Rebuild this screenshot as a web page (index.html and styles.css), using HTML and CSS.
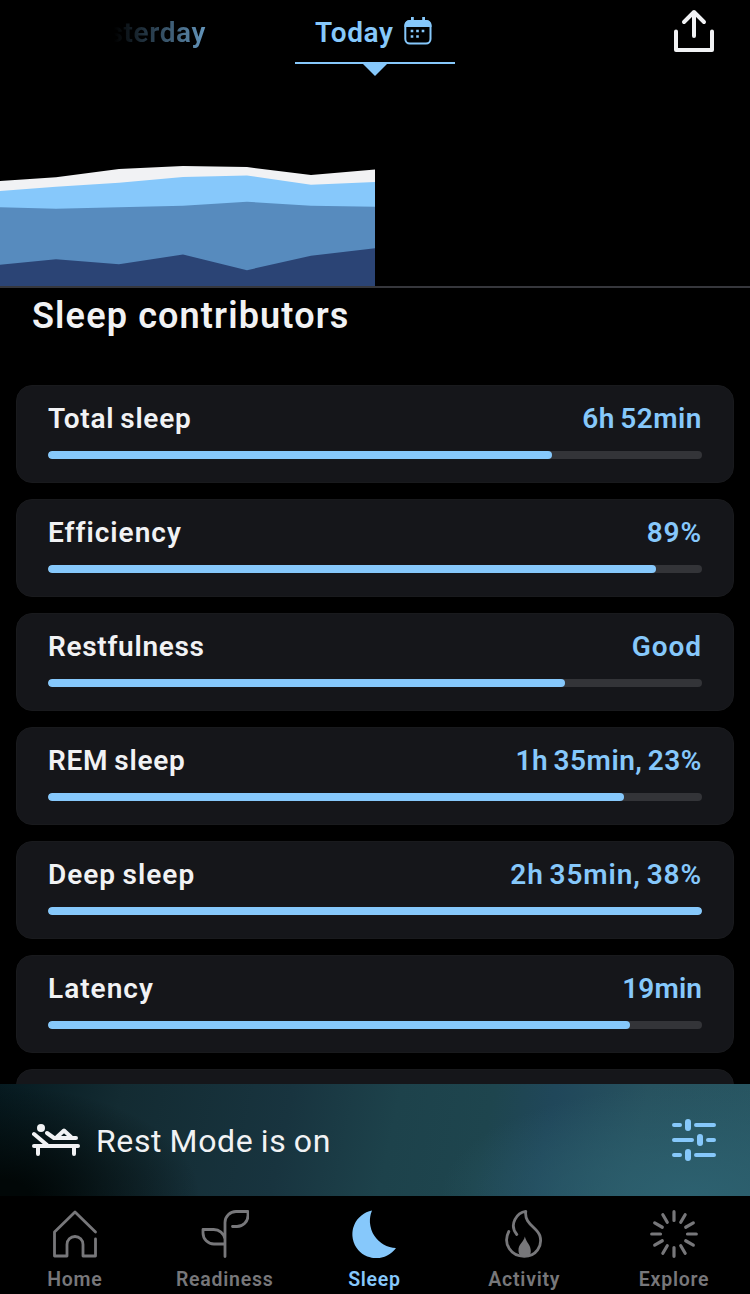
FILE: index.html
```html
<!DOCTYPE html>
<html lang="en">
<head>
<meta charset="utf-8">
<title>Sleep</title>
<link rel="stylesheet" href="styles.css">
</head>
<body>
<div class="app">
  <header class="header">
    <div class="day day-prev"><span class="day-text">Yesterday</span></div>
    <div class="day day-current">
      <span class="day-text">Today</span>
      <svg class="calendar" width="28" height="28" viewBox="0 0 28 28">
        <rect x="1.3" y="4.3" width="25.2" height="22.2" rx="4.5" fill="none" stroke="currentColor" stroke-width="2"/>
        <path d="M.5 10V8a5 5 0 0 1 5-5h17a5 5 0 0 1 5 5v2zM7 0h2.8v4H7zM18.200 0H21v4h-2.800z" fill="currentColor"/>
        <path d="M6.700 12.700h2.600v2.600H6.700zM12.200 12.700h2.600v2.600h-2.600zM17.700 12.700h2.600v2.600h-2.600zM6.700 18.200h2.600v2.600H6.700zM12.200 18.200h2.600v2.600h-2.600z" fill="currentColor"/>
      </svg>
      <svg class="pointer" width="24" height="12" viewBox="0 0 24 12"><path d="M0 0h24L12 12z" fill="currentColor"/></svg>
    </div>
    <svg class="share" width="44" height="44" viewBox="0 0 44 44" fill="none" stroke="currentColor" stroke-width="4" stroke-linecap="round" stroke-linejoin="round">
      <path d="M4 22.500V41h36V22.500M22 27V3M12 13l10-10 10 10"/>
    </svg>
  </header>

  <section class="chart">
    <svg width="375" height="126" viewBox="0 160 375 126">
      <path fill="#f1f2f4" d="M0 181L56 177.300 119 169 183 166 247 167 311 175 375 169.500V286H0z"/>
      <path fill="#86c8fb" d="M0 191L56 186.700 119 182.700 183 177 247 175.500 311 184.700 375 182V286H0z"/>
      <path fill="#578bbe" d="M0 207.300L56 208.700 119 207.200 183 205.700 247 201.700 311 205.700 375 206.700V286H0z"/>
      <path fill="#2b4475" d="M0 264.700L56 259.200 119 264.300 183 254.500 247 270.200 311 255.700 375 248.300V286H0z"/>
    </svg>
  </section>

  <main class="content">
    <h1 class="title">Sleep contributors</h1>
    <div class="cards">
      <article class="card"><div class="row"><span class="name">Total sleep</span><span class="value">6h 52min</span></div><div class="track"><div class="fill" style="width:77%"></div></div></article>
      <article class="card"><div class="row"><span class="name wide">Efficiency</span><span class="value wide">89%</span></div><div class="track"><div class="fill" style="width:93%"></div></div></article>
      <article class="card"><div class="row"><span class="name">Restfulness</span><span class="value wide">Good</span></div><div class="track"><div class="fill" style="width:79%"></div></div></article>
      <article class="card"><div class="row"><span class="name">REM sleep</span><span class="value">1h 35min, 23%</span></div><div class="track"><div class="fill" style="width:88%"></div></div></article>
      <article class="card"><div class="row"><span class="name wide">Deep sleep</span><span class="value wide">2h 35min, 38%</span></div><div class="track"><div class="fill" style="width:100%"></div></div></article>
      <article class="card"><div class="row"><span class="name wide">Latency</span><span class="value narrow">19min</span></div><div class="track"><div class="fill" style="width:89%"></div></div></article>
      <article class="card"></article>
    </div>
  </main>

  <section class="rest">
    <svg class="lounger" width="48" height="32" viewBox="0 0 48 32" fill="none" stroke="currentColor" stroke-width="4" stroke-linecap="round" stroke-linejoin="round">
      <circle cx="9" cy="4" r="4" fill="currentColor" stroke="none"/>
      <path d="M2 22h44M6 22v8M42 22v8"/>
      <path d="M2 10l13 11M15 9l7 5H44M25 13l7-6.500 7 6.500"/>
    </svg>
    <span class="rest-text">Rest Mode is on</span>
    <svg class="sliders" width="44" height="42" viewBox="0 0 44 42" fill="none" stroke="currentColor" stroke-linecap="round">
      <path stroke-width="4" d="M2 6h6M24 6h18M2 21h18M36 21h6M2 36h6M24 36h18"/>
      <path stroke-width="6" d="M16 3v6M28 18v6M16 33v6"/>
    </svg>
  </section>

  <nav class="nav">
    <a class="tab">
      <svg width="48" height="48" viewBox="0 0 48 48" fill="none" stroke="currentColor" stroke-width="2.800" stroke-linecap="round" stroke-linejoin="round"><path d="M44.500 22L24 2 3.500 22v24H16V34.500a8 8 0 0 1 16 0V46h12.500V29"/></svg>
      <span>Home</span>
    </a>
    <a class="tab">
      <svg width="48" height="48" viewBox="0 0 48 48" fill="none" stroke="currentColor" stroke-width="2.800" stroke-linecap="round" stroke-linejoin="round"><path d="M24 46.500V12.500A11 11 0 0 1 35 1.500h12V5.500a11 11 0 0 1-11 11H31.500M24 34H13a11 11 0 0 1-11-11V19.500H12.500A11.500 11.500 0 0 1 24 29"/></svg>
      <span>Readiness</span>
    </a>
    <a class="tab active">
      <svg width="48" height="48" viewBox="0 0 48 48"><path fill="currentColor" d="M22 .6A27 27 0 0 0 46 38 24 24 0 1 1 22 .6z"/></svg>
      <span>Sleep</span>
    </a>
    <a class="tab">
      <svg width="48" height="48" viewBox="0 0 48 48" fill="none" stroke="currentColor" stroke-width="2.800" stroke-linecap="round" stroke-linejoin="round"><path d="M8.800 21.500C2.500 34 11 46.300 24.200 46.300 36 46.300 43 36 39.800 25.500 37 17 24 14 25.800 1.400 17 2.500 8.500 14.500 16.800 24.500"/><path fill="currentColor" stroke="none" d="M24.800 26.500C24 32 18 34 18.500 41c.2 2 .8 3.600 2 5.500h8.600c1.200-1.900 1.700-3.500 1.700-5.500 0-6-4.500-8.500-6-14.500z"/></svg>
      <span>Activity</span>
    </a>
    <a class="tab">
      <svg width="48" height="48" viewBox="0 0 48 48" fill="none" stroke="currentColor" stroke-width="3.200" stroke-linecap="round"><path id="ray" d="M24 1.700v8.800M24 37.500v8.800"/><use href="#ray" transform="rotate(30 24 24)"/><use href="#ray" transform="rotate(60 24 24)"/><use href="#ray" transform="rotate(90 24 24)"/><use href="#ray" transform="rotate(120 24 24)"/><use href="#ray" transform="rotate(150 24 24)"/></svg>
      <span>Explore</span>
    </a>
  </nav>
</div>
</body>
</html>
```
FILE: styles.css
```css
* { box-sizing: border-box; }
body {
  margin: 0;
  background: #000;
  color: #f1f2f4;
  font-family: Roboto, "Liberation Sans", sans-serif;
  font-weight: 600;
}
.app {
  display: flex;
  flex-direction: column;
  width: 750px;
  height: 1294px;
  overflow: hidden;
}
.header {
  flex: none;
  display: grid;
  grid-template-columns: 206px 89px 160px 1fr;
  height: 64px;
  color: #86c8fb;
}
.day {
  display: flex;
  height: 64px;
  font-size: 28px;
  line-height: 66px;
  letter-spacing: .6px;
}
.day-text { white-space: nowrap; }
.day-prev {
  justify-content: flex-end;
  color: transparent;
  background: linear-gradient(90deg, #000 114px, #6ba0c9 212px);
  -webkit-background-clip: text;
  background-clip: text;
}
.day-current {
  position: relative;
  grid-column: 3;
  padding: 0 23px 0 20px;
  border-bottom: 2px solid currentColor;
}
.calendar { margin: 17px 0 0 auto; }
.pointer { position: absolute; left: 68px; top: 64px; }
.share { justify-self: end; margin: 9px 34px 0 0; color: #f1f2f4; }
.chart {
  flex: none;
  display: flex;
  align-items: flex-end;
  height: 224px;
  border-bottom: 2px solid #36373c;
}
.chart svg { display: block; }
.content { flex: 1; min-height: 0; overflow: hidden; }
.title {
  margin: 0;
  padding-left: 32px;
  height: 97px;
  font-size: 36px;
  line-height: 56px;
  font-weight: 600;
  letter-spacing: 1.15px;
}
.cards { display: flex; flex-direction: column; gap: 16px; padding: 0 16px; }
.card {
  height: 98px;
  border: 1px solid #191a1d;
  border-radius: 16px;
  background: #15161a;
  padding: 15px 31px 0;
}
.row {
  display: flex;
  justify-content: space-between;
  height: 50px;
  font-size: 28px;
  line-height: 36px;
}
.name { letter-spacing: .7px; word-spacing: -1.5px; }
.value { color: #86c8fb; letter-spacing: .5px; word-spacing: -2px; }
.name.wide { letter-spacing: 1px; }
.value.wide { letter-spacing: .9px; }
.value.narrow { letter-spacing: .1px; }
.track { height: 8px; border-radius: 4px; background: #333438; overflow: hidden; }
.fill { height: 8px; border-radius: 4px; background: #86c8fb; }
.rest {
  flex: none;
  display: flex;
  align-items: center;
  height: 112px;
  padding: 0 34px 0 32px;
  background:
    radial-gradient(ellipse 200px 110px at 0 100%, #010707 15%, transparent),
    radial-gradient(ellipse 250px 110px at 690px 100%, #2d6170, transparent),
    linear-gradient(102deg, #061a20 0, #132b32 16%, #18343f 38%, #1d424b 52%, #1e454e 64%, #20475a 72%, #27525f 84%, #285662 100%);
}
.rest-text { margin: 2px 0 0 16px; font-size: 32px; font-weight: 400; letter-spacing: .6px; word-spacing: -1px; }
.sliders { margin-left: auto; color: #86c8fb; }
.nav {
  flex: none;
  display: grid;
  grid-template-columns: repeat(5, 149.8px);
  height: 98px;
  padding-top: 14px;
  color: #77777a;
}
.tab { display: flex; flex-direction: column; align-items: center; font-size: 19.5px; line-height: 24px; letter-spacing: .75px; }
.tab svg { margin-bottom: 10px; }
.active { color: #86c8fb; }
```
